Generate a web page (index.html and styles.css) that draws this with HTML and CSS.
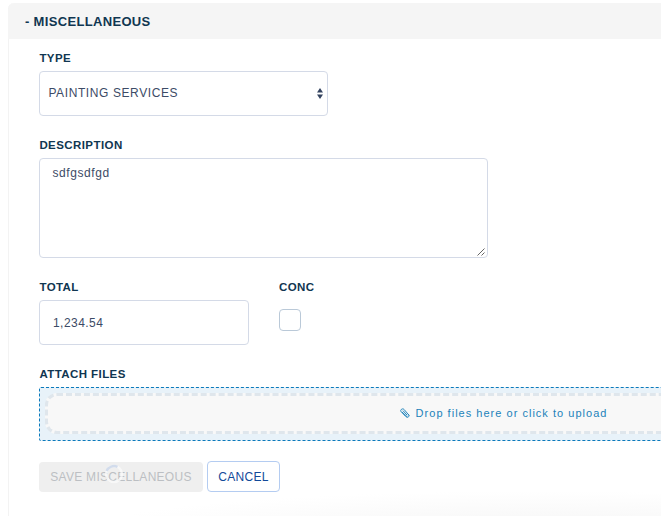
FILE: index.html
```
<!DOCTYPE html>
<html lang="en">
<head>
<meta charset="utf-8">
<title>Miscellaneous</title>
<link rel="stylesheet" href="styles.css">
</head>
<body>
<section class="panel">
  <header class="panel-header">- MISCELLANEOUS</header>
  <form class="panel-body">
    <div class="field">
      <label class="label">TYPE</label>
      <div class="control select">
        <span>PAINTING SERVICES</span>
        <svg class="arrows" width="6" height="11" viewBox="0 0 6 11"><path d="M3 0 6 4.6H0zM0 6.4H6L3 11z" fill="#33435f"/></svg>
      </div>
    </div>
    <div class="field">
      <label class="label">DESCRIPTION</label>
      <div class="control description">
        <span>sdfgsdfgd</span>
        <svg class="grip" width="8" height="8" viewBox="0 0 8 8"><path d="M.5 7.5 7.5.5M4.5 7.5l3-3" stroke="#555" stroke-width=".9"/></svg>
      </div>
    </div>
    <div class="row">
      <div class="field">
        <label class="label">TOTAL</label>
        <div class="control total">1,234.54</div>
      </div>
      <div class="field">
        <label class="label conc">CONC</label>
        <div class="checkbox"></div>
      </div>
    </div>
    <div class="field">
      <label class="label">ATTACH FILES</label>
      <div class="dropzone">
        <div class="drop-inner">
          <svg class="clip" width="10" height="10" viewBox="0 0 10 10"><path d="M7.2 8.9 2.1 4.1M8.8 7 4.1 1.5C2.7-.1-.2 1.7 1 3.5L5.6 8.4C7.2 10 9.9 9 8.8 7zM3.2 2.9l3.7 4" fill="none" stroke="#1c82ba" stroke-width=".95" stroke-linecap="round"/></svg>
          <span>Drop files here or click to upload</span>
        </div>
      </div>
    </div>
    <div class="actions">
      <div class="button save">SAVE MISCELLANEOUS
        <svg class="spinner" width="20" height="20" viewBox="0 0 20 20" fill="none" stroke-width="2.4"><circle cx="10" cy="10" r="8" stroke="#fafafa" stroke-opacity=".8"/><path d="M2.6 7A8 8 0 0 1 13.5 2.8" stroke="#d2dcec"/></svg>
      </div>
      <div class="button cancel">CANCEL</div>
    </div>
  </form>
</section>
</body>
</html>
```
FILE: styles.css
```
* { box-sizing: border-box; }
body {
  margin: 0;
  height: 516px;
  overflow: hidden;
  background: #fff;
  color: #3c4b66;
  font: 12px/16px "Liberation Sans", Arial, sans-serif;
}
.panel {
  width: 990px;
  height: 530px;
  margin: 3px 0 0 8px;
  border-left: 1px solid #f3f3f3;
  border-radius: 6px 6px 0 0;
  background: radial-gradient(ellipse 460px 42px at 530px 530px, #f5f5f5, #fff);
}
.panel-header {
  height: 36px;
  margin-left: -1px;
  padding-left: 17px;
  border-radius: 6px 6px 0 0;
  background: #f5f5f5;
  color: #103651;
  font-size: 13px;
  font-weight: bold;
  line-height: 37px;
  letter-spacing: .33px;
}
.panel-body { padding: 11px 30px 0; }
.label {
  display: block;
  height: 21px;
  padding-left: .4px;
  color: #103651;
  font-size: 11.5px;
  font-weight: bold;
  letter-spacing: .42px;
}
.conc { padding-left: 0; }
.control {
  border: 1px solid #d4dae7;
  border-radius: 4px;
  background: #fff;
  letter-spacing: .6px;
}
.select {
  display: flex;
  align-items: center;
  justify-content: space-between;
  width: 289px;
  height: 45px;
  margin-bottom: 21px;
  padding: 0 4px 1px 8.4px;
}
.description {
  position: relative;
  width: 449px;
  height: 100px;
  margin-bottom: 21px;
  padding: 6px 12.4px;
}
.grip { position: absolute; right: 2px; bottom: 1px; }
.row { display: flex; gap: 30px; }
.total {
  width: 210px;
  height: 45px;
  margin-bottom: 21px;
  padding-left: 13px;
  line-height: 44px;
  letter-spacing: .45px;
}
.checkbox {
  width: 22px;
  height: 22px;
  margin-top: 9px;
  border: 1px solid #bac9d8;
  border-radius: 4px;
}
.dropzone {
  width: 928px;
  height: 54px;
  padding: 5px;
  border: 1px dashed #0b7abc;
  border-radius: 2px;
  background: #e8f2f9;
}
.drop-inner {
  display: flex;
  align-items: center;
  justify-content: center;
  gap: 6px;
  height: 41px;
  padding: 0 0 2px 1px;
  border: 3px dashed #dfe6ec;
  border-radius: 12px;
  background: #f8f8f8;
  color: #1c82ba;
  font-size: 11px;
  letter-spacing: 1.02px;
}
.actions {
  display: flex;
  align-items: flex-end;
  gap: 4px;
  margin-top: 20px;
}
.button {
  position: relative;
  border-radius: 4px;
  letter-spacing: .27px;
  text-align: center;
  white-space: nowrap;
}
.save {
  width: 164px;
  height: 30px;
  background: #efefef;
  color: #bcbfc3;
  line-height: 30px;
}
.spinner { position: absolute; left: 64.5px; top: 2px; }
.cancel {
  width: 73px;
  height: 31px;
  border: 1px solid #b4ccf1;
  background: #fff;
  color: #124999;
  line-height: 30px;
}
```
